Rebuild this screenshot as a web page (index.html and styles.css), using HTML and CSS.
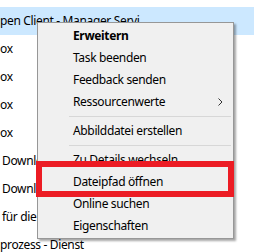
FILE: index.html
```html
<!DOCTYPE html>
<html>
<head>
<meta charset="utf-8">
<link rel="stylesheet" href="styles.css">
</head>
<body>
<div class="list">
  <div class="row selected">pen Client - Manager Servi</div>
  <div class="row">ox</div>
  <div class="row">ox</div>
  <div class="row">ox</div>
  <div class="row">ox</div>
  <div class="row ind">Downlo</div>
  <div class="row ind">Downlo</div>
  <div class="row ind">für die</div>
  <div class="row">prozess - Dienst</div>
</div>
<div class="menu">
  <div class="item bold">Erweitern</div>
  <div class="item">Task beenden</div>
  <div class="item">Feedback senden</div>
  <div class="item sub">Ressourcenwerte<svg class="chev" width="5" height="8" viewBox="0 0 5 8"><path d="M0.5 0.5 L4 4 L0.5 7.5" fill="none" stroke="#333" stroke-width="1"/></svg></div>
  <div class="sep"></div>
  <div class="item">Abbilddatei erstellen</div>
  <div class="sep"></div>
  <div class="item">Zu Details wechseln</div>
  <div class="item">Dateipfad öffnen</div>
  <div class="item">Online suchen</div>
  <div class="item">Eigenschaften</div>
</div>
<div class="mark"></div>
</body>
</html>
```
FILE: styles.css
```css
html, body {
  margin: 0;
  padding: 0;
  background: #ffffff;
}
body {
  width: 254px;
  height: 252px;
  overflow: hidden;
  font-family: "Noto Sans", "Open Sans", sans-serif;
  font-size: 12px;
  letter-spacing: -0.35px;
  color: #000;
  position: relative;
}
.list {
  padding-top: 7px;
  display: flex;
  flex-direction: column;
}
.row {
  height: 28px;
  line-height: 28px;
  padding-left: 0;
  white-space: nowrap;
}
.row.ind {
  padding-left: 2px;
}
.row.selected {
  background: #cce8ff;
}
.menu {
  position: absolute;
  left: 37px;
  top: 22px;
  width: 197px;
  height: 217px;
  box-sizing: border-box;
  background: #f0f0f0;
  border: 1px solid #979797;
  box-shadow: 2px 2px 2px rgba(0, 0, 0, 0.35);
  padding: 2px 1px 1px;
  display: flex;
  flex-direction: column;
}
.item {
  height: 22px;
  line-height: 22px;
  padding-left: 34px;
  display: flex;
  align-items: center;
  white-space: nowrap;
}
.item.bold {
  font-weight: 700;
}
.item.sub {
  justify-content: space-between;
  padding-right: 9px;
}
.chev {
  display: block;
}
.sep {
  height: 7px;
  display: flex;
  align-items: center;
  padding-left: 30px;
  padding-right: 1px;
}
.sep::before {
  content: "";
  flex: 1;
  height: 1px;
  background: #d7d7d7;
}
.mark {
  position: absolute;
  left: 36px;
  top: 161px;
  width: 198px;
  height: 36px;
  box-sizing: border-box;
  border: 6px solid #ec1c24;
}
```
